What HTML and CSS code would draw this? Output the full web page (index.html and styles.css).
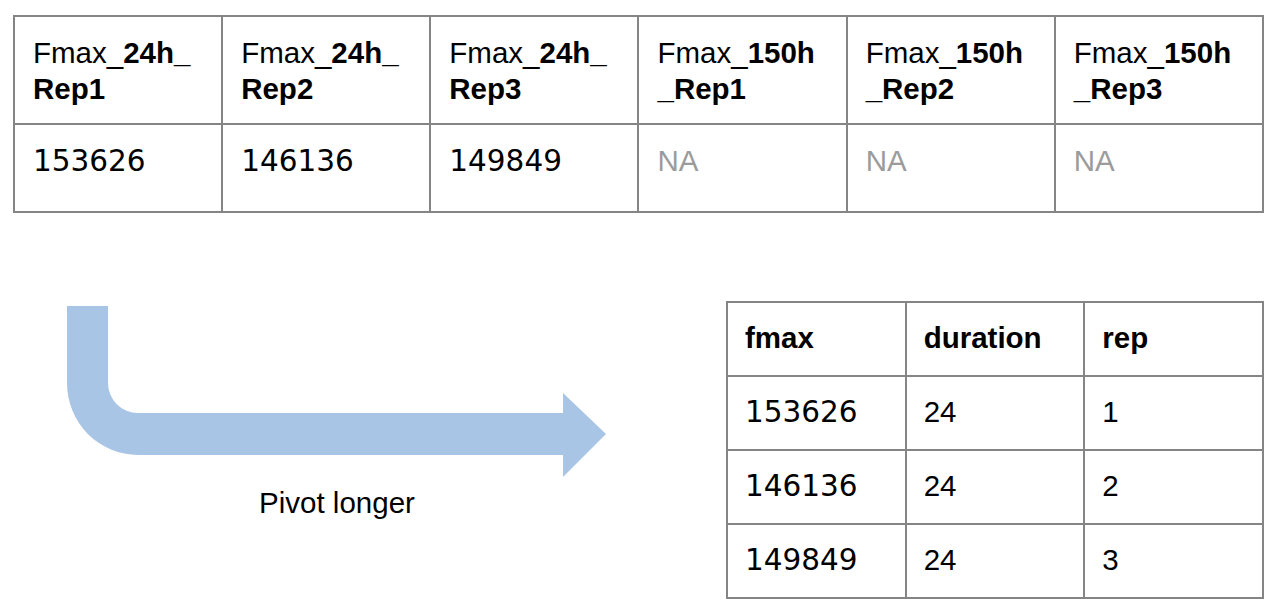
FILE: index.html
```html
<!DOCTYPE html>
<html lang="en">
<head>
<meta charset="utf-8">
<title>Pivot longer</title>
<link rel="stylesheet" href="styles.css">
</head>
<body>
<table class="wide">
  <tr class="wide-head">
    <th>Fmax_<b>24h_</b><br><b>Rep1</b></th>
    <th>Fmax_<b>24h_</b><br><b>Rep2</b></th>
    <th>Fmax_<b>24h_</b><br><b>Rep3</b></th>
    <th>Fmax_<b>150h</b><br><b>_Rep1</b></th>
    <th>Fmax_<b>150h</b><br><b>_Rep2</b></th>
    <th>Fmax_<b>150h</b><br><b>_Rep3</b></th>
  </tr>
  <tr class="wide-body">
    <td class="num">153626</td>
    <td class="num">146136</td>
    <td class="num">149849</td>
    <td class="na">NA</td>
    <td class="na">NA</td>
    <td class="na">NA</td>
  </tr>
</table>

<div class="lower">
  <div class="pivot">
    <svg class="arrow" width="540" height="172" viewBox="67 306 540 172" aria-hidden="true">
      <path d="M67,306 H108 V383 A30,30 0 0 0 138,413 H563 V393 L606,434 L563,477 V455 H138 A71,72 0 0 1 67,383 Z" fill="#a9c5e5"/>
    </svg>
    <div class="caption">Pivot longer</div>
  </div>

  <table class="long">
    <tr class="long-head">
      <th>fmax</th>
      <th>duration</th>
      <th>rep</th>
    </tr>
    <tr>
      <td class="num">153626</td>
      <td>24</td>
      <td>1</td>
    </tr>
    <tr>
      <td class="num">146136</td>
      <td>24</td>
      <td>2</td>
    </tr>
    <tr>
      <td class="num">149849</td>
      <td>24</td>
      <td>3</td>
    </tr>
  </table>
</div>
</body>
</html>
```

FILE: styles.css
```css
html, body {
  margin: 0;
  padding: 0;
  background: #ffffff;
}

body {
  font-family: "Liberation Sans", Arial, sans-serif;
  color: #000000;
}

table {
  border-collapse: collapse;
  table-layout: fixed;
}

th, td {
  border: 2px solid #858585;
  text-align: left;
  vertical-align: top;
  font-size: 29.5px;
  line-height: 36px;
  padding: 0;
}

th {
  font-weight: normal;
}

th b {
  font-weight: bold;
}

.num {
  font-family: "DejaVu Sans", Verdana, sans-serif;
}

.na {
  color: #9b9b9b;
}

/* top wide table */
.wide {
  margin: 15px 14px 0 13px;
  width: 1251px;
}

.wide-head th {
  height: 72px;
  padding: 18px 8px 16px 18px;
}

.wide-body td {
  height: 36px;
  padding: 18px 8px 32px 18px;
}

/* lower area */
.lower {
  display: flex;
  align-items: flex-start;
  margin-top: 88px;
}

.pivot {
  display: flex;
  flex-direction: column;
  align-items: center;
  margin-left: 67px;
  margin-top: 5px;
}

.arrow {
  display: block;
}

.caption {
  margin-top: 8px;
  font-size: 29.5px;
  line-height: 34px;
}

.long {
  margin-left: auto;
  margin-right: 14px;
  width: 538px;
}

.long th, .long td {
  height: 36px;
  padding: 17px 8px 19px 17px;
}

.long-head th {
  font-weight: bold;
}
```
